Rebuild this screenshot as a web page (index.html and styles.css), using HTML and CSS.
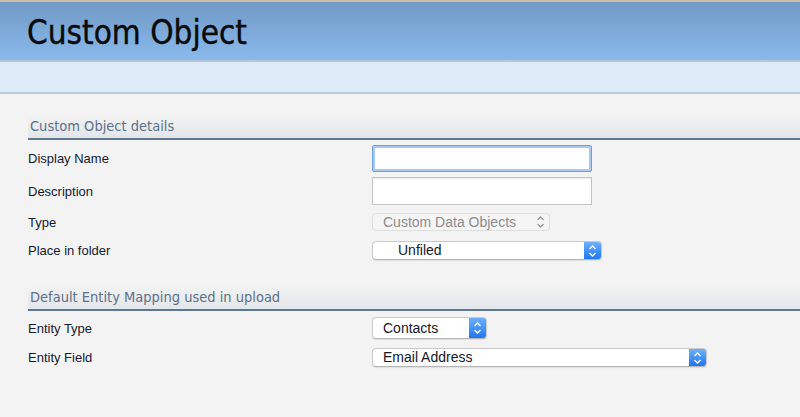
FILE: index.html
```html
<!DOCTYPE html>
<html>
<head>
<meta charset="utf-8">
<title>Custom Object</title>
<link rel="stylesheet" href="styles.css">
</head>
<body>
<div class="top-rule"></div>
<header class="banner"><h1 class="title">Custom Object</h1></header>
<div class="subbar"></div>
<main class="content">
  <section class="group">
    <h2 class="group-title">Custom Object details</h2>
    <div class="row row-name">
      <span class="label">Display Name</span>
      <div class="text-input focused"></div>
    </div>
    <div class="row row-desc">
      <span class="label">Description</span>
      <div class="text-input"></div>
    </div>
    <div class="row row-type">
      <span class="label">Type</span>
      <div class="select disabled sel-type">
        <span class="select-text">Custom Data Objects</span>
        <span class="stepper">
          <svg width="9" height="14" viewBox="0 0 9 14"><path d="M1.5 5 L4.5 2 L7.5 5 M1.5 9 L4.5 12 L7.5 9" fill="none" stroke="#9a9a9a" stroke-width="1.3"/></svg>
        </span>
      </div>
    </div>
    <div class="row row-folder">
      <span class="label">Place in folder</span>
      <div class="select sel-folder">
        <span class="select-text indent">Unfiled</span>
        <span class="stepper blue">
          <svg width="9" height="14" viewBox="0 0 9 14"><path d="M1.5 5 L4.5 2 L7.5 5 M1.5 9 L4.5 12 L7.5 9" fill="none" stroke="#fff" stroke-width="1.4"/></svg>
        </span>
      </div>
    </div>
  </section>
  <section class="group second">
    <h2 class="group-title">Default Entity Mapping used in upload</h2>
    <div class="row row-etype">
      <span class="label">Entity Type</span>
      <div class="select sel-contacts">
        <span class="select-text">Contacts</span>
        <span class="stepper blue">
          <svg width="9" height="14" viewBox="0 0 9 14"><path d="M1.5 5 L4.5 2 L7.5 5 M1.5 9 L4.5 12 L7.5 9" fill="none" stroke="#fff" stroke-width="1.4"/></svg>
        </span>
      </div>
    </div>
    <div class="row row-efield">
      <span class="label">Entity Field</span>
      <div class="select sel-email">
        <span class="select-text">Email Address</span>
        <span class="stepper blue">
          <svg width="9" height="14" viewBox="0 0 9 14"><path d="M1.5 5 L4.5 2 L7.5 5 M1.5 9 L4.5 12 L7.5 9" fill="none" stroke="#fff" stroke-width="1.4"/></svg>
        </span>
      </div>
    </div>
  </section>
</main>
</body>
</html>
```
FILE: styles.css
```css
html, body {
  margin: 0;
  padding: 0;
}
body {
  background: #f3f3f3;
  font-family: "Liberation Sans", Arial, sans-serif;
  width: 800px;
  height: 417px;
  overflow: hidden;
}
.top-rule {
  height: 2px;
  background: #cbbfaa;
}
.banner {
  height: 58px;
  background: linear-gradient(#7199c5, #89baec);
  border-bottom: 2px solid #b5c6d8;
}
.title {
  margin: 0;
  padding: 3px 0 0 27px;
  font-family: "DejaVu Sans Condensed", "DejaVu Sans", sans-serif;
  font-weight: normal;
  font-size: 33px;
  line-height: 55px;
  color: #0a0a0a;
  -webkit-text-stroke: 0.4px #0a0a0a;
}
.subbar {
  height: 30px;
  background: #deebf8;
  border-bottom: 2px solid #bccbda;
}
.content {
  padding: 20px 0 0 28px;
}
.group-title {
  margin: 0;
  height: 24px;
  padding: 0 0 0 2px;
  font-family: "DejaVu Sans Condensed", "DejaVu Sans", sans-serif;
  font-weight: normal;
  font-size: 14.5px;
  line-height: 25px;
  color: #5c718a;
  background: linear-gradient(#f3f3f3, #e3e6ea);
  border-bottom: 2px solid #5f7892;
}
.second {
  margin-top: 25px;
}
.row {
  display: flex;
  align-items: center;
}
.label {
  width: 344px;
  flex: none;
  font-size: 13px;
  color: #151a30;
}
.row-name { margin-top: 5px; }
.row-desc { margin-top: 5px; }
.row-type { margin-top: 8px; }
.row-folder { margin-top: 10px; }
.row-etype { margin-top: 6px; }
.row-efield { margin-top: 9px; }

.text-input {
  box-sizing: border-box;
  width: 220px;
  height: 28px;
  background: #fff;
  border: 1px solid #c4c4c4;
  box-shadow: inset 0 1px 1px rgba(0,0,0,0.08);
}
.text-input.focused {
  height: 27px;
  border: 1px solid #6d9fdc;
  box-shadow: inset 0 0 0 2px #a9c9f0;
  border-radius: 2px;
}
.select {
  box-sizing: border-box;
  display: flex;
  align-items: center;
  height: 19px;
  background: #fff;
  border: 1px solid #c9c9c9;
  border-bottom-color: #b3b3b3;
  border-radius: 4px;
  box-shadow: 0 1px 1px rgba(0,0,0,0.08);
  overflow: hidden;
}
.select-text {
  flex: 1;
  padding-left: 10px;
  font-size: 14px;
  line-height: 17px;
  color: #141829;
  white-space: nowrap;
}
.select-text.indent {
  padding-left: 25px;
}
.stepper {
  flex: none;
  width: 17px;
  align-self: stretch;
  display: flex;
  align-items: center;
  justify-content: center;
}
.stepper.blue {
  background: linear-gradient(#6eb0fb, #1f76f4);
}
.select.disabled {
  background: #f5f5f5;
  border-color: #dedede;
  box-shadow: none;
}
.select.disabled .select-text {
  color: #8c8c8c;
}
.sel-type { width: 178px; height: 18px; }
.sel-folder { width: 230px; }
.sel-contacts { width: 115px; height: 22px; }
.sel-email { width: 335px; }
```
